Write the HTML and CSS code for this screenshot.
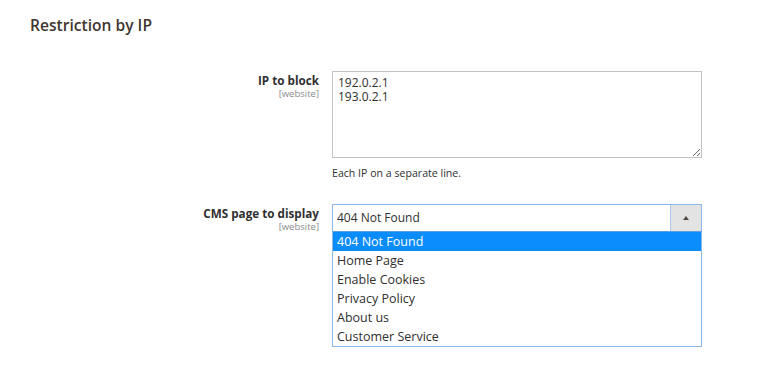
FILE: index.html
```html
<!DOCTYPE html>
<html lang="en">
  <head>
    <meta charset="UTF-8" />
    <meta name="viewport" content="width=device-width, initial-scale=1.0" />
    <title>Restriction by IP</title>
    <link rel="stylesheet" href="styles.css">
  </head>
  <body>
    <div class="section">
      <h2 class="section-title">Restriction by IP</h2>
      <div class="field field-ip">
        <label class="field-label" for="ip-block">
          <span class="label-text">IP to block</span>
          <span class="scope">[website]</span>
        </label>
        <div class="field-control">
          <textarea id="ip-block" class="ip-textarea">192.0.2.1
193.0.2.1</textarea>
          <p class="note">Each IP on a separate line.</p>
        </div>
      </div>
      <div class="field field-cms">
        <label class="field-label">
          <span class="label-text">CMS page to display</span>
          <span class="scope">[website]</span>
        </label>
        <div class="field-control">
          <div class="select-box">
            <span class="select-value">404 Not Found</span>
            <span class="select-arrow"></span>
          </div>
          <ul class="select-list">
            <li class="selected">404 Not Found</li>
            <li>Home Page</li>
            <li>Enable Cookies</li>
            <li>Privacy Policy</li>
            <li>About us</li>
            <li>Customer Service</li>
          </ul>
        </div>
      </div>
    </div>
  </body>
</html>
```

FILE: styles.css
```css
body {
  margin: 0;
  padding: 0;
  background-color: #ffffff;
  font-family: "Open Sans", Arial, sans-serif;
  color: #303030;
}
.section {
  padding: 15px 0 0 30px;
}
.section-title {
  margin: 0 0 35px;
  font-size: 15.6px;
  line-height: 21px;
  font-weight: 600;
  color: #41362f;
}
.field {
  display: grid;
  grid-template-columns: 289px 370px;
  column-gap: 13px;
}
.field-cms {
  margin-top: 24px;
}
.field-label {
  display: flex;
  flex-direction: column;
  align-items: flex-end;
  padding-top: 1px;
}
.label-text {
  font-size: 11.7px;
  line-height: 16px;
  font-weight: 700;
  color: #303030;
}
.scope {
  font-size: 9.5px;
  line-height: 12px;
  color: #8a8a8a;
}
.field-control {
  display: flex;
  flex-direction: column;
}
.ip-textarea {
  box-sizing: border-box;
  width: 370px;
  height: 87px;
  margin: 0;
  padding: 4px 5px;
  border: 1px solid #c2c2c2;
  font-family: "Open Sans", Arial, sans-serif;
  font-size: 12px;
  line-height: 13.5px;
  color: #303030;
  resize: vertical;
}
.note {
  margin: 8px 0 0;
  font-size: 10.6px;
  line-height: 14px;
  color: #303030;
}
.select-box {
  box-sizing: border-box;
  display: flex;
  height: 28px;
  border: 1px solid #8cb7e6;
  border-bottom-color: #5d9ee0;
}
.select-value {
  flex: 1;
  padding-left: 4px;
  font-size: 12px;
  line-height: 26px;
  color: #303030;
}
.select-arrow {
  position: relative;
  width: 30px;
  background-color: #e3e3e3;
  border-left: 1px solid #a9c9ee;
}
.select-arrow::after {
  content: "";
  position: absolute;
  left: 12px;
  top: 11px;
  border-left: 3.5px solid transparent;
  border-right: 3.5px solid transparent;
  border-bottom: 4px solid #514943;
}
.select-list {
  box-sizing: border-box;
  margin: 0;
  padding: 0;
  list-style: none;
  border: 1px solid #8cb7e6;
  border-top: none;
}
.select-list li {
  padding-left: 4px;
  font-size: 12.5px;
  line-height: 19px;
  color: #303030;
}
.select-list li.selected {
  background-color: #0a8cfb;
  color: #ffffff;
}
```
